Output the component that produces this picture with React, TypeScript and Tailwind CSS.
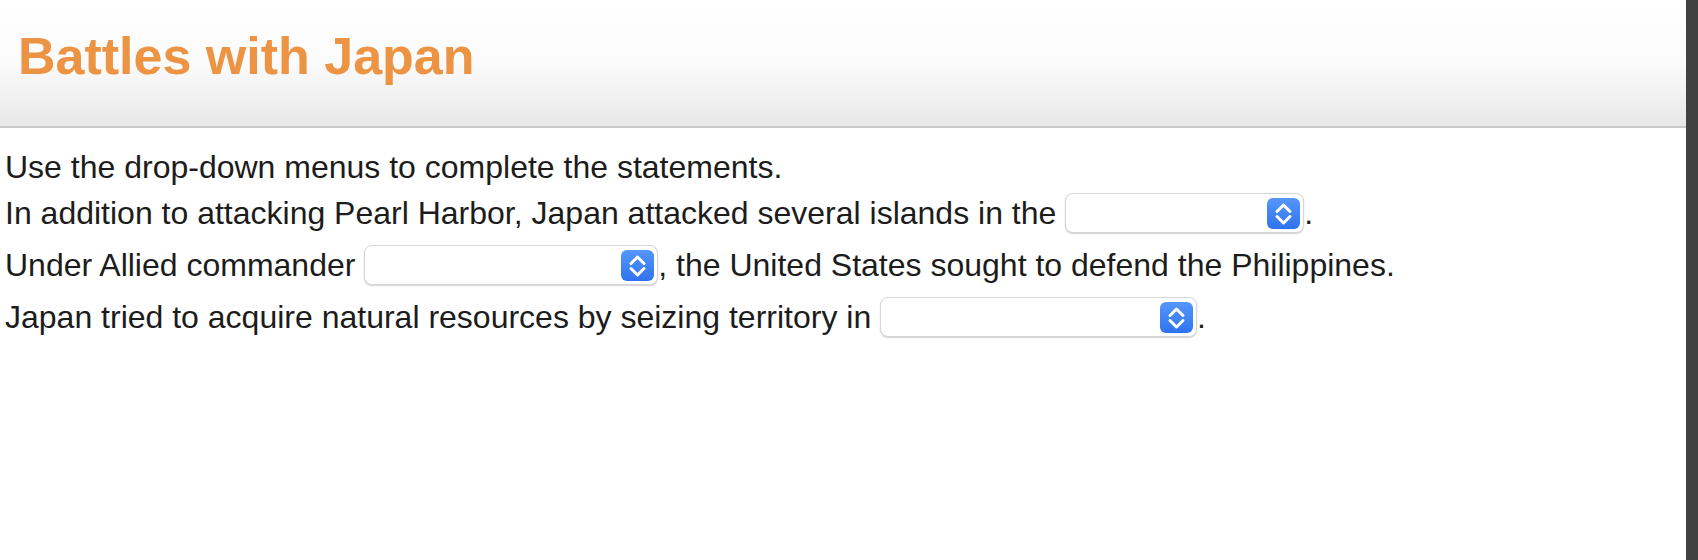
import React from "react";

function Dropdown({ width }: { width: string }) {
  return (
    <span
      className={`flex h-[40px] ${width} shrink-0 items-center justify-end rounded-[8px] border border-[#d6d6d6] bg-white pr-[3px] shadow-[0_1px_1.5px_rgba(0,0,0,0.18)]`}
    >
      <span className="flex h-[31px] w-[33px] items-center justify-center rounded-[6px] bg-linear-to-b from-[#5597fb] to-[#2f72ef]">
        <svg width="33" height="31" viewBox="0 0 33 31" fill="none">
          <path
            d="M10 13.5 L16.5 7 L23 13.5"
            stroke="white"
            strokeWidth="3"
            strokeLinecap="round"
            strokeLinejoin="round"
          />
          <path
            d="M10 18.5 L16.5 25 L23 18.5"
            stroke="white"
            strokeWidth="3"
            strokeLinecap="round"
            strokeLinejoin="round"
          />
        </svg>
      </span>
    </span>
  );
}

export default function App() {
  return (
    <div className="flex h-[560px] w-full bg-white font-['Liberation_Sans',Arial,sans-serif]">
      <div className="flex-1">
        {/* Header */}
        <div className="h-[128px] border-b-2 border-[#c8c8c8] bg-linear-to-b from-white via-[#fbfbfb] to-[#e8e8e8] pl-[18px] pt-[28px]">
          <h1 className="text-[52px] font-bold leading-[57px] text-[#ed9444]">
            Battles with Japan
          </h1>
        </div>

        {/* Statements */}
        <div className="pl-[5px] pt-[7px] text-[32px] text-[#1c1c1c]">
          <div className="flex h-[52px] items-center pt-[12px]">
            <span className="whitespace-pre">Use the drop-down menus to complete the statements.</span>
          </div>
          <div className="flex h-[52px] items-center">
            <span className="whitespace-pre">In addition to attacking Pearl Harbor, Japan attacked several islands in the </span>
            <Dropdown width="w-[239px]" />
            <span className="whitespace-pre">.</span>
          </div>
          <div className="flex h-[52px] items-center">
            <span className="whitespace-pre">Under Allied commander </span>
            <Dropdown width="w-[294px]" />
            <span className="whitespace-pre">, the United States sought to defend the Philippines.</span>
          </div>
          <div className="flex h-[52px] items-center">
            <span className="whitespace-pre">Japan tried to acquire natural resources by seizing territory in </span>
            <Dropdown width="w-[317px]" />
            <span className="whitespace-pre">.</span>
          </div>
        </div>
      </div>
      <div className="h-full w-[12px] shrink-0 bg-[#414141]" />
    </div>
  );
}
